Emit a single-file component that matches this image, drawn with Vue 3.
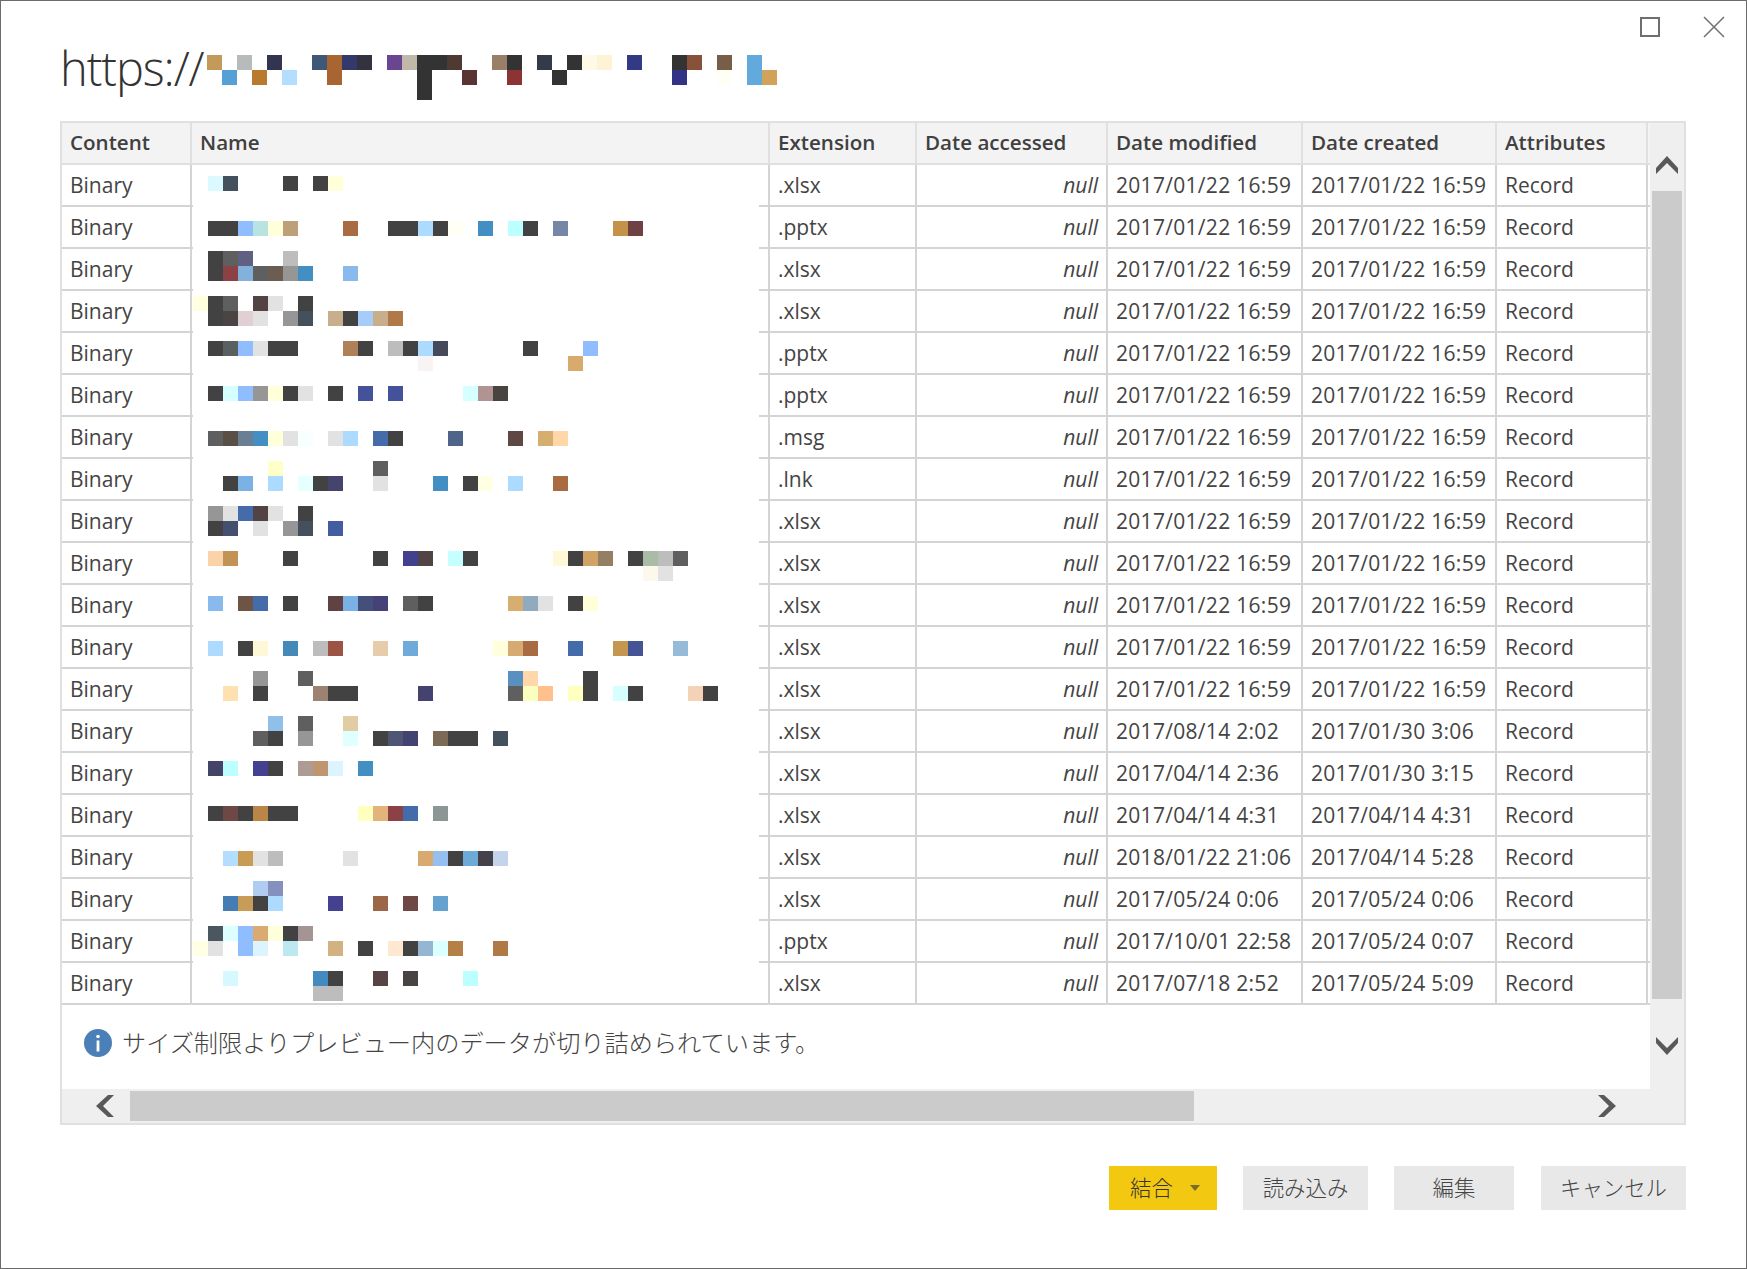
<script setup>
const D = '#424242'
const titleBlocks = [
  [0, 'c49a5a', 0], [2, 'b8bbbb', 0], [4, '333450', 0], [7, '3f5878', 0], [8, 'a86532', 0], [9, '333a6b', 0], [10, '333340', 0],
  [12, '6a4591', 0], [13, 'c0b8a8', 0], [14, '333333', 0], [15, '333333', 0], [16, '4f3a33', 0], [19, '9a7f68', 0], [20, '333333', 0],
  [22, '333a48', 0], [24, '333333', 0], [25, 'fff9e8', 0], [26, 'fff3d6', 0], [28, '333a85', 0], [31, '333333', 0], [32, '87513a', 0],
  [34, '785e48', 0], [36, '62a9dc', 0],
  [1, '55a0d4', 1], [3, 'b97a30', 1], [5, 'b3deff', 1], [8, 'a86532', 1], [14, '333333', 1], [17, '5a3333', 1], [20, '8c3333', 1],
  [23, '333333', 1], [31, '333385', 1], [34, 'fffff5', 1], [36, '62a9dc', 1], [37, 'd1a35a', 1],
  [14, '333333', 2]
]
const raw = {
  0: '0 dcf9ff,1 44505c,5 L,7 L,8 ffffd9',
  3: '0 L,1 L,2 8fbdff,3 b8e3e0,4 ffffd9,5 bd9f78,9 a86b42,12 L,13 L,14 addaff,15 L,16 fffff5,18 438fc3,20 bcffff,21 L,23 7586a6,27 c49248,28 6e4244',
  5: '0 L,1 5f5f5f,2 606082,5 bdbdbd',
  6: '0 L,1 8c4244,2 82b2dc,3 5f5f5f,4 6b5d52,5 969696,6 438fc3,9 88baee',
  8: '-1 ffffe0,0 L,1 5f5f5f,3 524442,4 e2e2e2,6 L',
  9: '0 L,1 4a4444,2 e0d0d4,3 e2e2e2,5 969696,6 44505c,8 c9ae8c,9 L,10 a6ccfa,11 c9ae8c,12 b07a48',
  11: '0 L,1 5a6060,2 8fbdff,3 e2e2e2,4 L,5 L,9 b08058,10 L,12 bdbdbd,13 L,14 addaff,15 444a5a,21 L,25 8fbdff',
  12: '14 f8f4f4,24 d8aa6e',
  14: '0 L,1 d6ffff,2 8fbdff,3 969696,4 ffffd9,5 L,6 e2e2e2,8 L,10 44529c,12 44529c,17 d6ffff,18 b09494,19 484442',
  17: '0 5f5f5f,1 5a4f44,2 6a7f94,3 438fc3,4 ffffd9,5 e2e2e2,6 f8ffff,8 e2e2e2,9 addaff,11 446cab,12 L,16 4e6488,20 5d4844,22 d6ae70,23 ffd7a8',
  19: '4 ffffc8,11 5f5f5f',
  20: '1 L,2 7ab2e6,4 addaff,6 e6ffff,7 L,8 44446e,11 e2e2e2,15 438fc3,17 L,18 ffffe4,20 addaff,23 a86b42',
  22: '0 969696,1 e2e2e2,2 446cab,3 524444,4 e2e2e2,6 L',
  23: '0 L,1 44506e,3 e2e2e2,5 969696,6 44505c,8 445ca0',
  25: '0 fad4a8,1 c29355,5 L,11 L,13 444090,14 504444,16 c6ffff,17 L,23 fff8d6,24 L,25 d0a264,26 957f64,28 L,29 a8bca6,30 bdbdbd,31 5f5f5f',
  26: '29 fdf8ec,30 e2e2e2',
  28: '0 88baee,2 6e5444,3 446cab,5 L,8 604244,9 7ab2e6,10 44507a,11 444278,13 5f5f5f,14 L,20 d6ae70,21 90aabf,22 e2e2e2,24 L,25 ffffd9',
  31: '0 addaff,2 L,3 fff8d6,5 438ab8,7 bdbdbd,8 9c5444,11 e6ccaa,13 70aad8,19 ffffdc,20 d6aa70,21 a86b42,24 446cab,27 c49650,28 445494,31 96bbd8',
  33: '3 969696,6 5f5f5f,20 5a90c0,21 ffd7a8,25 L',
  34: '1 ffe0b0,3 L,7 9c8270,8 L,9 L,14 44426e,20 5f5f5f,21 faffc0,22 ffc08e,24 ffffc0,25 L,27 d6ffff,28 L,32 f4d2b8,33 L',
  36: '4 90c0ea,6 5f5f5f,9 e2cca4',
  37: '3 5f5f5f,4 L,6 969696,9 e0ffff,11 L,12 4e5674,13 444270,15 7c6a56,16 L,17 L,19 44505c',
  39: '0 444468,1 bcffff,3 444290,4 L,6 ac9c94,7 c09670,8 dcf4ff,10 438fc3',
  42: '0 L,1 6e4844,2 L,3 ba8648,4 L,5 L,10 ffffc0,11 e2b47c,12 8c4244,13 446cab,15 8c9694',
  45: '1 b3deff,2 c89c54,3 e2e2e2,4 bdbdbd,9 e2e2e2,14 d8aa70,15 94bfee,16 L,17 6eaad8,18 444248,19 c4d4ea',
  47: '3 b0ccf0,4 8690bc',
  48: '1 447cb4,2 c89c58,3 L,4 addaff,8 444290,11 9c6648,13 6e4844,15 64a2d0',
  50: '0 4a5660,1 dcffff,2 8fbdff,3 daaa70,4 ffffdc,5 L,6 a49494',
  51: '-1 ffffe4,0 e2e2e2,2 8fbdff,3 dcf4ff,5 bce8f2,8 d2b280,10 L,12 fee8d0,13 L,14 94b6d2,15 dcffff,16 b48048,19 b07a46',
  53: '1 d6f9ff,7 438ac0,8 L,11 584444,13 484444,17 bcffff',
  54: '7 bdbdbd,8 bdbdbd'
}
const blocks = Object.entries(raw).flatMap(([k, list]) =>
  list.split(',').map((item) => {
    const [n, c] = item.split(' ')
    return { x: 208 + 15 * Number(n), y: 176 + 15 * Number(k), fill: c === 'L' ? D : '#' + c }
  })
)
const same = '2017/01/22 16:59'
const rows = [
  ['.xlsx', same, same], ['.pptx', same, same], ['.xlsx', same, same], ['.xlsx', same, same],
  ['.pptx', same, same], ['.pptx', same, same], ['.msg', same, same], ['.lnk', same, same],
  ['.xlsx', same, same], ['.xlsx', same, same], ['.xlsx', same, same], ['.xlsx', same, same],
  ['.xlsx', same, same],
  ['.xlsx', '2017/08/14 2:02', '2017/01/30 3:06'],
  ['.xlsx', '2017/04/14 2:36', '2017/01/30 3:15'],
  ['.xlsx', '2017/04/14 4:31', '2017/04/14 4:31'],
  ['.xlsx', '2018/01/22 21:06', '2017/04/14 5:28'],
  ['.xlsx', '2017/05/24 0:06', '2017/05/24 0:06'],
  ['.pptx', '2017/10/01 22:58', '2017/05/24 0:07'],
  ['.xlsx', '2017/07/18 2:52', '2017/05/24 5:09']
]
const headers = ['Content', 'Name', 'Extension', 'Date accessed', 'Date modified', 'Date created', 'Attributes']
</script>

<template>
  <div class="window">
    <header class="head">
      <div class="title-wrap">
        <h1 class="title">https://</h1>
        <svg class="title-mosaic" width="570" height="45" shape-rendering="crispEdges">
          <rect
            v-for="(b, i) in titleBlocks"
            :key="i"
            :x="b[0] * 15"
            :y="b[2] * 15"
            width="15"
            height="15"
            :fill="'#' + b[1]"
          />
        </svg>
      </div>
      <div class="controls">
        <svg width="22" height="22" viewBox="0 0 22 22"><rect x="2" y="2" width="18" height="18" fill="none" stroke="#6f6f6f" stroke-width="2" /></svg>
        <svg width="22" height="22" viewBox="0 0 22 22"><path d="M1 1 L21 21 M21 1 L1 21" fill="none" stroke="#707070" stroke-width="1.5" /></svg>
      </div>
    </header>

    <section class="preview">
      <div class="upper">
        <div class="left">
          <div class="table">
            <div class="row head-row">
              <div v-for="h in headers" :key="h" class="cell hcell">{{ h }}</div>
            </div>
            <div class="body">
              <div v-for="(r, i) in rows" :key="i" class="row body-row">
                <div class="cell">Binary</div>
                <div class="cell"></div>
                <div class="cell">{{ r[0] }}</div>
                <div class="cell nullc">null</div>
                <div class="cell date">{{ r[1] }}</div>
                <div class="cell date">{{ r[2] }}</div>
                <div class="cell">Record</div>
              </div>
              <svg class="mosaic" width="566" height="838" viewBox="193 165 566 838" shape-rendering="crispEdges">
                <rect v-for="(b, i) in blocks" :key="i" :x="b.x" :y="b.y" width="15" height="15" :fill="b.fill" />
              </svg>
            </div>
          </div>
          <div class="info">
            <svg width="28" height="28" viewBox="0 0 28 28">
              <circle cx="14" cy="14" r="14" fill="#4a7fb8" />
              <circle cx="14" cy="7.5" r="1.8" fill="#fff" />
              <rect x="12.6" y="11.5" width="2.8" height="11" fill="#fff" />
            </svg>
            <span class="info-text">サイズ制限よりプレビュー内のデータが切り詰められています。</span>
          </div>
        </div>
        <div class="vscroll">
          <svg class="chev up" width="22" height="18" viewBox="0 0 22 18"><path d="M0 12 L11 0 L22 12 L22 18 L11 7 L0 18 Z" fill="#595959" /></svg>
          <div class="vthumb"></div>
          <svg class="chev down" width="22" height="18" viewBox="0 0 22 18"><path d="M0 0 L11 11 L22 0 L22 6 L11 18 L0 6 Z" fill="#595959" /></svg>
        </div>
      </div>
      <div class="hscroll">
        <svg class="hleft" width="18" height="22" viewBox="0 0 18 22"><path d="M12 0 L18 0 L7 11 L18 22 L12 22 L0 11 Z" fill="#595959" /></svg>
        <div class="hthumb"></div>
        <svg class="hright" width="18" height="22" viewBox="0 0 18 22"><path d="M0 0 L6 0 L18 11 L6 22 L0 22 L11 11 Z" fill="#595959" /></svg>
      </div>
    </section>

    <footer class="foot">
      <button class="btn primary">結合<i class="caret"></i></button>
      <button class="btn w125">読み込み</button>
      <button class="btn w120">編集</button>
      <button class="btn w145">キャンセル</button>
    </footer>
  </div>
</template>

<style>
html, body { margin: 0; background: #fff; }
</style>

<style scoped>
.window {
  width: 1747px;
  height: 1269px;
  box-sizing: border-box;
  border: 1px solid #6b6b6b;
  background: #fff;
  color: #444;
  font-family: "Open Sans", "Noto Sans CJK JP", sans-serif;
  overflow: hidden;
}
.head {
  height: 120px;
  display: flex;
  justify-content: space-between;
  padding: 0 21px 0 59px;
  box-sizing: border-box;
}
.title-wrap {
  display: flex;
  align-items: flex-start;
}
.title {
  margin: 0;
  width: 147px;
  font-family: "Open Sans", sans-serif;
  font-weight: 300;
  font-size: 47px;
  line-height: 64px;
  padding-top: 35px;
  letter-spacing: -1.1px;
  color: #333;
}
.title-mosaic { margin-top: 54px; flex: none; }
.controls {
  display: flex;
  gap: 42px;
  padding-top: 15px;
  align-items: flex-start;
}
.preview {
  margin-left: 59px;
  width: 1626px;
  height: 1004px;
  box-sizing: border-box;
  border: 2px solid #e0e0e0;
  display: flex;
  flex-direction: column;
}
.upper { display: flex; flex: 1; min-height: 0; }
.left { width: 1588px; display: flex; flex-direction: column; }
.row {
  display: grid;
  grid-template-columns: 130px 578px 147px 191px 195px 194px 151px 2px;
}
.head-row {
  height: 42px;
  box-sizing: border-box;
  background: #f3f3f3;
  border-bottom: 2px solid #e0e0e0;
}
.body { position: relative; }
.body-row {
  height: 42px;
  box-sizing: border-box;
  border-bottom: 2px solid #d4d4d4;
}
.cell {
  box-sizing: border-box;
  border-right: 2px solid #d4d4d4;
  padding: 1px 8px 0 8px;
  font-size: 21px;
  line-height: 39px;
  white-space: nowrap;
  overflow: hidden;
  color: #444;
}
.date { letter-spacing: 0.3px; }
.hcell {
  font-weight: 600;
  font-size: 20.6px;
  border-right-color: #e0e0e0;
  padding-top: 0;
  line-height: 39px;
  color: #404040;
}
.nullc { font-style: italic; text-align: right; }
.mosaic {
  position: absolute;
  left: 131px;
  top: 0;
  background: #fff;
}
.info {
  flex: 1;
  display: flex;
  align-items: center;
  gap: 10px;
  padding: 0 0 8px 22px;
  font-size: 24.2px;
  font-weight: 300;
  color: #444;
  background: #fff;
}
.info-text { margin-bottom: 4px; }
.vscroll {
  flex: 1;
  background: #efefef;
  display: flex;
  flex-direction: column;
  align-items: center;
}
.chev { flex: none; }
.up { margin-top: 33px; }
.vthumb {
  width: 30px;
  height: 808px;
  margin-top: 17px;
  background: #cbcbcb;
  flex: none;
}
.down { margin-top: 38px; }
.hscroll {
  height: 34px;
  flex: none;
  background: #efefef;
  display: flex;
  align-items: center;
}
.hleft { margin-left: 34px; flex: none; }
.hthumb {
  width: 1064px;
  height: 30px;
  margin-left: 16px;
  background: #cbcbcb;
  flex: none;
}
.hright { margin-left: 404px; flex: none; }
.foot {
  display: flex;
  justify-content: flex-end;
  gap: 26px;
  padding: 41px 60px 0 0;
}
.btn {
  height: 44px;
  border: 0;
  padding: 0 0 3px;
  background: #e8e8e8;
  color: #444;
  font-family: "Noto Sans CJK JP", sans-serif;
  font-size: 21.4px;
  font-weight: 300;
  display: flex;
  align-items: center;
  justify-content: center;
}
.primary {
  width: 108px;
  background: #f2c811;
  color: #333;
  justify-content: flex-start;
  padding-left: 21px;
}
.caret {
  width: 0;
  height: 0;
  margin: 3px 0 0 17px;
  border-left: 5.5px solid transparent;
  border-right: 5.5px solid transparent;
  border-top: 6px solid #7a6a30;
}
.w125 { width: 125px; }
.w120 { width: 120px; }
.w145 { width: 145px; margin-left: 1px; }
</style>
